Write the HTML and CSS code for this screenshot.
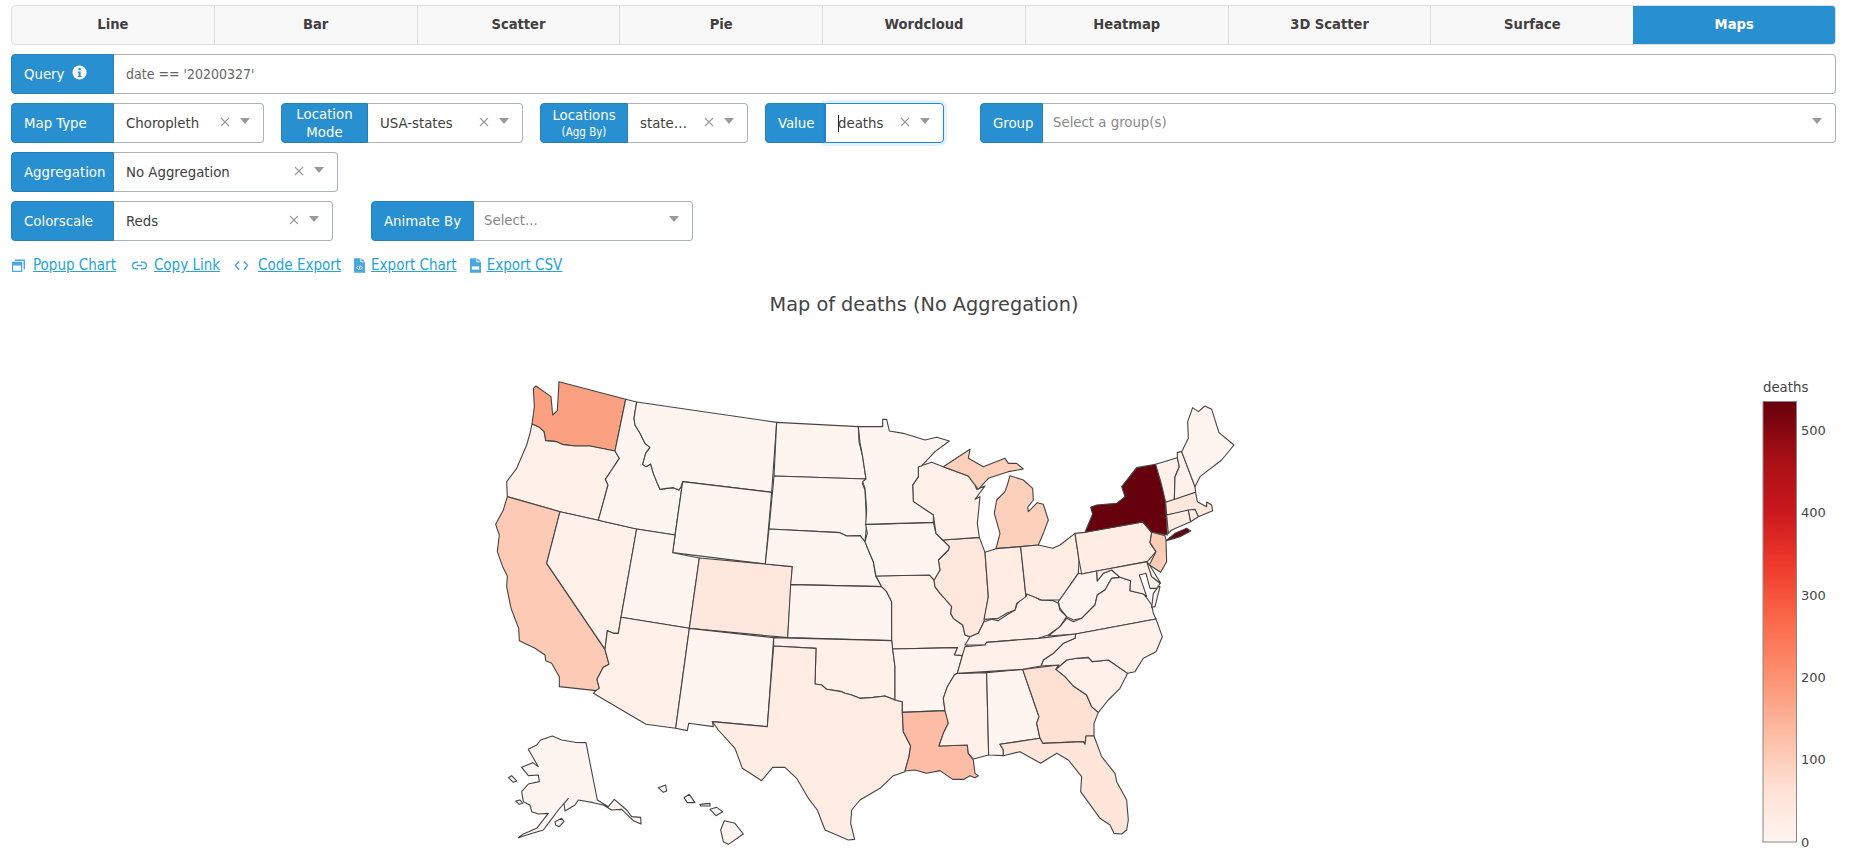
FILE: index.html
```html
<!DOCTYPE html>
<html lang="en">
<head>
<meta charset="utf-8">
<title>Maps</title>
<link rel="stylesheet" href="styles.css">
</head>
<body>
<div class="page">
  <nav class="tabs">
    <a class="tab">Line</a><a class="tab">Bar</a><a class="tab">Scatter</a><a class="tab">Pie</a><a class="tab">Wordcloud</a><a class="tab">Heatmap</a><a class="tab">3D Scatter</a><a class="tab">Surface</a><a class="tab active">Maps</a>
  </nav>

  <div class="row">
    <div class="group w-full">
      <div class="label">Query<svg class="info" viewBox="0 0 16 16"><circle cx="8" cy="8" r="7.5" fill="#fff"/><rect x="6.9" y="3.2" width="2.4" height="2.3" fill="#2890d0"/><path d="M6 7h3.2v4.6h1v1.3H6v-1.3h1V8.300H6z" fill="#2890d0"/></svg></div>
      <div class="input"><span class="query">date == '20200327'</span></div>
    </div>
  </div>

  <div class="row">
    <div class="group w-type">
      <div class="label">Map Type</div>
      <div class="select"><span class="value">Choropleth</span><svg class="x" viewBox="0 0 10 10"><path d="M1 1l8 8M9 1l-8 8"/></svg><i class="caret"></i></div>
    </div>
    <div class="group w-mode">
      <div class="label tall narrow-mode">Location Mode</div>
      <div class="select"><span class="value">USA-states</span><svg class="x" viewBox="0 0 10 10"><path d="M1 1l8 8M9 1l-8 8"/></svg><i class="caret"></i></div>
    </div>
    <div class="group w-locs">
      <div class="label tall narrow-locs"><span>Locations<small>(Agg By)</small></span></div>
      <div class="select"><span class="value clip">state…</span><svg class="x" viewBox="0 0 10 10"><path d="M1 1l8 8M9 1l-8 8"/></svg><i class="caret"></i></div>
    </div>
    <div class="group w-value">
      <div class="label narrow-value">Value</div>
      <div class="select focus"><span class="value"><b class="cursor"></b>deaths</span><svg class="x" viewBox="0 0 10 10"><path d="M1 1l8 8M9 1l-8 8"/></svg><i class="caret"></i></div>
    </div>
    <div class="group w-group">
      <div class="label narrow-group">Group</div>
      <div class="select"><span class="placeholder">Select a group(s)</span><i class="caret"></i></div>
    </div>
  </div>

  <div class="row">
    <div class="group w-agg">
      <div class="label">Aggregation</div>
      <div class="select"><span class="value">No Aggregation</span><svg class="x" viewBox="0 0 10 10"><path d="M1 1l8 8M9 1l-8 8"/></svg><i class="caret"></i></div>
    </div>
  </div>

  <div class="row">
    <div class="group w-color">
      <div class="label">Colorscale</div>
      <div class="select"><span class="value">Reds</span><svg class="x" viewBox="0 0 10 10"><path d="M1 1l8 8M9 1l-8 8"/></svg><i class="caret"></i></div>
    </div>
    <div class="group w-anim">
      <div class="label">Animate By</div>
      <div class="select"><span class="placeholder">Select...</span><i class="caret"></i></div>
    </div>
  </div>

  <div class="links">
    <span class="link wide"><svg class="ic" viewBox="0 0 16 16"><path d="M4 1.500h11v10.500h-1.600V3.200H4z"/><path d="M1 4h11v11H1zM2.300 8v5.700h8.400V8z"/></svg><a>Popup Chart</a></span>
    <span class="link"><svg class="ic" viewBox="0 0 16 16"><path d="M6.500 4.500H4.200a3.500 3.500 0 0 0 0 7h2.300M9.500 4.500h2.300a3.500 3.500 0 0 1 0 7H9.500M5 8h6" fill="none" stroke="#4aa8de" stroke-width="1.500"/></svg><a>Copy Link</a></span>
    <span class="link tight"><svg class="ic code" viewBox="0 0 16 16"><path d="M5.500 3.500L1.500 8l4 4.500M10.500 3.500l4 4.500-4 4.500" fill="none" stroke="#4aa8de" stroke-width="1.500"/></svg><a>Code Export</a></span>
    <span class="link tight"><svg class="ic file" viewBox="0 0 12 16"><path d="M0 0h7v4.500h5V16H0zM8 0l4 3.500H8z"/><path d="M4.700 8.500L3 10.500l1.700 2M7.300 8.500L9 10.500l-1.700 2M6.700 8l-1.400 5" fill="none" stroke="#fff" stroke-width=".9"/></svg><a>Export Chart</a></span>
    <span class="link"><svg class="ic file" viewBox="0 0 12 16"><path d="M0 0h7v4.500h5V16H0zM8 0l4 3.500H8z"/><rect x="2" y="9" width="8" height="3.500" fill="#fff"/></svg><a>Export CSV</a></span>
  </div>

  <div class="chart">
    <svg class="plot" viewBox="0 280 1850 575">
      <defs>
        <linearGradient id="reds" x1="0" y1="1" x2="0" y2="0">
          <stop offset="0" stop-color="#fff5f0"/><stop offset=".125" stop-color="#fee0d2"/><stop offset=".25" stop-color="#fcbba1"/><stop offset=".375" stop-color="#fc9272"/><stop offset=".5" stop-color="#fb6a4a"/><stop offset=".625" stop-color="#ef3b2c"/><stop offset=".75" stop-color="#cb181d"/><stop offset=".875" stop-color="#a50f15"/><stop offset="1" stop-color="#67000d"/>
        </linearGradient>
      </defs>
      <text class="title" x="924" y="311" text-anchor="middle">Map of deaths (No Aggregation)</text>

      <g class="map" transform="translate(480 370) scale(.33333)">
        <polygon class="wa" points="160,55 168,48 213,80 218,135 232,122 237,35 437,88 405,243 330,228 285,228 250,224 230,215 197,212 192,185 175,170 156,162 163,110"/>
        <polygon class="s1" points="156,162 175,170 192,185 197,212 230,215 250,224 285,228 330,228 405,243 418,265 395,300 376,328 384,345 355,451 240,425 82,380 80,335 110,295 140,225 150,190"/>
        <polygon class="ca" points="82,380 240,425 200,580 375,838 387,883 370,892 351,928 358,955 348,962 238,950 238,920 215,880 197,872 195,855 165,835 118,812 116,775 95,720 92,710 80,650 82,618 68,590 52,545 58,495 47,463 70,420"/>
        <polygon class="s1" points="240,425 355,451 470,477 423,742 415,790 400,790 382,782 375,838 200,580"/>
        <polygon class="s0" points="437,88 470,96 462,145 465,165 480,190 495,220 510,232 497,250 488,283 498,290 512,282 520,310 530,335 540,358 560,355 580,353 597,360 603,350 608,335 585,495 470,477 355,451 384,345 376,328 395,300 418,265 405,243"/>
        <polygon class="s0" points="470,96 890,157 875,367 608,335 603,350 597,360 580,353 560,355 540,358 530,335 520,310 512,282 498,290 488,283 497,250 510,232 495,220 480,190 465,165 462,145"/>
        <polygon class="s0" points="608,335 875,367 856,582 578,548"/>
        <polygon class="s0" points="470,477 585,495 578,548 658,564 628,775 423,742"/>
        <polygon class="s3" points="658,564 856,582 937,590 923,803 628,775"/>
        <polygon class="s1" points="423,742 628,775 587,1075 498,1063 340,970 348,962 358,955 351,928 370,892 387,883 375,838 382,782 400,790 415,790"/>
        <polygon class="s0" points="628,775 881,803 862,1070 697,1055 700,1070 626,1060 622,1082 587,1075"/>
        <polygon class="s0" points="890,157 1135,170 1137,215 1148,260 1158,327 882,318"/>
        <polygon class="s0" points="882,318 1158,327 1147,340 1155,360 1160,463 1155,515 1140,497 1100,498 1080,488 867,477"/>
        <polygon class="s0" points="867,477 1080,488 1100,498 1140,497 1155,515 1165,540 1180,575 1187,618 1205,650 932,644 937,590 856,582"/>
        <polygon class="s0" points="932,644 1205,650 1220,665 1235,695 1235,812 923,803"/>
        <polygon class="s1" points="1188,618 1348,615 1362,630 1365,650 1380,670 1398,690 1415,710 1412,730 1420,745 1448,765 1455,795 1470,800 1460,830 1447,857 1423,855 1432,833 1238,837 1235,812 1235,695 1220,665 1205,650"/>
        <polygon class="s1" points="881,803 1235,812 1238,837 1245,890 1245,990 1215,978 1180,982 1140,985 1115,975 1095,970 1085,965 1040,958 1025,945 1005,942 1008,835 881,828"/>
        <polygon class="s2" points="881,828 1008,835 1005,942 1025,945 1040,958 1085,965 1095,970 1115,975 1140,985 1180,982 1215,978 1245,990 1267,995 1267,1027 1270,1085 1292,1128 1287,1160 1275,1205 1240,1217 1200,1255 1140,1290 1115,1320 1112,1360 1124,1408 1105,1410 1035,1380 1012,1320 985,1285 950,1225 915,1192 878,1192 845,1232 787,1195 765,1135 715,1080 697,1055 862,1070"/>
        <polygon class="s3" points="1388,510 1498,502 1515,547 1525,680 1515,740 1512,755 1495,790 1470,800 1455,795 1448,765 1420,745 1412,730 1415,710 1398,690 1380,670 1365,650 1362,630 1380,600 1375,570 1405,540 1408,530"/>
        <polygon class="s1" points="1455,825 1470,800 1495,790 1512,755 1535,748 1555,752 1580,735 1605,720 1612,700 1640,672 1655,675 1680,690 1720,692 1735,700 1740,720 1760,740 1740,770 1705,795 1675,805 1520,817 1515,825"/>

        <g transform="translate(0 720)">
          <polygon class="s0" points="318,398 352,570 385,590 403,568 440,600 455,620 482,622 483,642 460,632 425,598 395,600 370,585 340,578 295,570 285,585 255,603 252,580 265,565 235,600 205,640 190,660 150,672 115,683 130,672 170,655 205,610 175,612 155,605 150,585 130,575 125,545 145,522 178,515 175,495 145,497 125,472 158,458 175,470 145,418 170,405 182,390 217,378 245,390 285,397"/>
          <polygon class="s0" points="85,503 95,497 110,513 100,517"/>
          <polygon class="s0" points="107,573 120,570 128,580 118,583"/>
          <polygon class="s0" points="225,635 245,625 252,635 237,650 227,645"/>
          <polygon class="s0" points="535,533 557,525 560,543 550,547"/>
          <polygon class="s0" points="612,563 628,553 645,578 622,578"/>
          <polygon class="s0" points="660,583 690,580 690,588 662,588"/>
          <polygon class="s0" points="690,598 710,592 728,605 708,617"/>
          <polygon class="s0" points="733,632 765,640 790,672 745,703 730,695 722,660"/>
        </g>

        <g transform="translate(1140 0)">
          <polygon class="s0" points="17,463 220,457 228,490 248,510 268,530 265,540 235,570 240,600 222,630 208,615 48,618 40,575 25,540 15,515 22,490"/>
          <polygon class="s1" points="175,290 215,277 250,290 325,318 345,345 350,358 375,348 345,388 360,380 352,460 358,502 248,510 228,490 220,435 160,395 158,345 175,320"/>
          <polygon class="s0" points="-5,170 68,170 68,148 80,148 88,183 130,190 195,210 230,202 268,213 225,245 185,288 175,290 175,320 158,345 160,395 220,435 220,457 17,463 20,420 15,355 8,335 18,327 8,260 0,218"/>
          <polygon class="mi" points="250,290 330,238 325,265 370,290 435,265 445,280 470,280 490,297 445,305 385,325 355,358 345,345 325,318"/>
          <polygon class="mi" points="450,317 490,330 518,355 520,390 503,412 505,425 532,398 550,403 565,450 550,490 535,525 408,536 420,490 403,430 410,390 435,365 442,345"/>
          <polygon class="s2" points="375,547 408,536 482,530 498,680 470,700 465,720 440,730 415,745 372,748 385,680"/>
          <polygon class="s2" points="482,530 535,525 578,535 600,525 645,490 657,570 655,610 620,660 600,690 575,690 545,690 500,672 498,680"/>
          <polygon class="s2" points="645,490 675,487 848,456 868,478 875,490 870,518 888,545 862,575 665,612 657,570"/>
          <polygon class="ny" points="675,487 698,432 692,412 710,405 770,400 795,380 785,350 830,293 887,283 905,345 915,380 922,495 875,487 848,456"/>
          <polygon class="ny" points="917,513 945,490 980,475 992,483 960,500"/>
          <polygon class="nj" points="875,487 915,497 918,510 920,575 902,607 868,585 888,545 870,518"/>
          <polygon class="s1" points="887,283 952,263 958,290 945,320 943,390 917,397 905,345"/>
          <polygon class="s1" points="952,263 952,247 965,245 1005,350 1007,367 943,390 945,320 958,290"/>
          <polygon class="s0" points="965,245 985,205 983,155 998,113 1015,125 1035,108 1055,118 1077,188 1122,225 1085,270 1020,320 1005,350"/>
          <polygon class="s3" points="917,397 1007,367 1012,395 1040,410 1040,396 1055,405 1058,422 1015,440 1005,420 920,435"/>
          <polygon class="s2" points="920,435 985,420 992,455 935,480 925,490"/>
          <polygon class="s2" points="985,420 1005,418 1015,440 992,455"/>
          <polygon class="s0" points="655,610 665,612 710,603 712,633 730,610 755,600 780,622 755,625 735,660 712,675 705,705 665,745 640,750 620,740 600,715 595,695 620,660"/>
          <polygon class="s1" points="565,798 600,770 620,745 640,755 665,745 705,705 712,675 735,660 755,625 780,622 812,632 810,662 850,672 865,690 875,705 880,730 888,747 647,792"/>
          <polygon class="s1" points="710,603 862,575 875,620 900,640 892,655 870,655 858,610 838,615 850,650 860,680 850,672 810,662 812,632 780,622 755,600 730,610 712,633"/>
          <polygon class="s1" points="860,575 872,590 902,640 875,620"/>
          <polygon class="s1" points="900,650 885,710 875,712 880,670 895,650"/>
        </g>

        <g transform="translate(1140 720)">
          <polygon class="s0" points="98,117 292,113 283,135 307,137 292,190 283,195 262,230 250,265 255,302 127,307 127,275 105,270 105,170"/>
          <polygon class="la" points="127,307 255,302 262,318 265,340 250,370 237,408 322,405 325,430 340,450 345,490 355,497 345,503 330,497 312,508 278,508 240,482 200,490 165,480 135,483 147,440 152,408 130,365"/>
          <polygon class="s1" points="292,190 380,188 386,435 340,447 325,430 322,405 237,408 250,370 265,340 255,302 250,265 262,230 283,195"/>
          <polygon class="s0" points="380,188 488,178 530,300 537,320 530,340 540,385 420,403 430,420 430,437 386,435"/>
          <polygon class="ga" points="488,178 597,165 588,178 615,200 640,228 680,255 695,290 715,307 702,340 702,378 678,378 675,403 670,395 548,400 540,385 530,340 537,320"/>
          <polygon class="fl" points="420,403 540,385 548,400 670,395 675,403 678,378 702,378 725,440 765,490 770,515 800,570 805,630 800,660 785,672 762,670 750,645 720,625 662,545 665,500 625,450 590,430 542,460 515,445 480,425 430,437 430,420"/>
          <polygon class="s1" points="588,178 620,150 650,145 685,142 697,155 745,150 803,190 780,235 745,270 715,307 695,290 680,255 640,228 615,200"/>
          <polygon class="s1" points="543,168 550,150 580,130 610,100 645,85 647,72 888,27 907,80 888,125 850,145 825,185 803,190 745,150 697,155 685,142 650,145 620,150 588,178 597,165"/>
          <polygon class="s1" points="315,110 375,105 380,97 535,85 647,72 645,85 610,100 580,130 550,150 543,168 488,178 292,190 307,137"/>
        </g>
      </g>

      <text class="cbtitle" x="1763" y="392">deaths</text>
      <rect class="cbar" x="1763" y="401.500" width="33.500" height="440.500" fill="url(#reds)"/>
      <text class="tick" x="1801" y="435">500</text>
      <text class="tick" x="1801" y="517">400</text>
      <text class="tick" x="1801" y="600">300</text>
      <text class="tick" x="1801" y="682">200</text>
      <text class="tick" x="1801" y="764">100</text>
      <text class="tick" x="1801" y="847">0</text>
    </svg>
  </div>
</div>
</body>
</html>
```

FILE: styles.css
```css
* { box-sizing: border-box; }
html, body { margin: 0; padding: 0; height: 100%; overflow: hidden; background: #fff; }
body {
  font-family: "DejaVu Sans Condensed", "DejaVu Sans", sans-serif;
  font-size: 14.8px;
  color: #404040;
}
.page { padding: 5px 14px 0 11px; }

.tabs {
  display: flex;
  height: 40px;
  border: 1px solid #ddd;
  border-radius: 4px;
  background: #f8f8f8;
  overflow: hidden;
  margin-bottom: 9px;
}
.tab {
  flex: 1 1 0;
  display: flex;
  align-items: center;
  justify-content: center;
  padding-bottom: 4px;
  font-size: 14.6px;
  font-weight: 700;
  border-left: 1px solid #ddd;
}
.tab:first-child { border-left: 0; }
.tab.active { background: #2890d0; color: #fff; border-left: 0; }

.row { display: flex; height: 40px; margin-bottom: 9px; }
.group { display: flex; height: 40px; }
.w-full { width: 100%; }
.w-type { width: 253px; margin-right: 17px; }
.w-mode { width: 242px; margin-right: 17px; }
.w-locs { width: 208px; margin-right: 17px; }
.w-value { width: 179px; margin-right: 36px; }
.w-group { flex: 1; }
.w-agg { width: 327px; }
.w-color { width: 322px; margin-right: 38px; }
.w-anim { width: 322px; }

.label {
  flex: 0 0 103px;
  display: flex;
  align-items: center;
  background: #2890d0;
  color: #fff;
  border: 1px solid #2580b8;
  border-radius: 4px 0 0 4px;
  line-height: 18px;
  padding: 0 0 1px 12px;
}
.tall { justify-content: center; text-align: center; padding: 0 2px; }
.narrow-mode { flex-basis: 87px; }
.narrow-locs { flex-basis: 88px; }
.narrow-value { flex-basis: 60px; }
.narrow-group { flex-basis: 63px; }
.label small { display: block; font-size: 11.500px; line-height: 17px; }
.label span { display: block; }
.info { width: 15px; height: 15px; margin-left: 8px; margin-top: -2px; }

.input, .select {
  flex: 1;
  min-width: 0;
  display: flex;
  align-items: center;
  background: #fff;
  border: 1px solid #aab4b8;
  border-left: 0;
  border-radius: 0 4px 4px 0;
  padding: 0 13px 1px 12px;
}
.query { color: #666; font-size: 14px; }
.value { flex: 1; white-space: nowrap; overflow: hidden; }
.placeholder { flex: 1; color: #888; margin-top: -3px; margin-left: -2px; }
.x { width: 10px; height: 10px; margin-right: 10px; margin-top: -2px; flex: none; }
.x path { stroke: #999; stroke-width: 1.1; fill: none; }
.caret {
  flex: none;
  width: 0;
  height: 0;
  margin-top: -3px;
  border-left: 5.500px solid transparent;
  border-right: 5.500px solid transparent;
  border-top: 6px solid #999;
}
.focus {
  border: 1px solid #1a86f0;
  box-shadow: 0 0 0 3px rgba(0, 123, 255, .1);
}
.cursor { display: inline-block; width: 1px; height: 17px; margin-right: -1px; background: #222; vertical-align: -4px; }

.links { display: flex; align-items: center; height: 16px; margin-top: 16px; font-size: 15px; }
.link { display: flex; align-items: center; margin-right: 14px; }
.link.wide { margin-right: 16px; }
.link.tight { margin-right: 13px; }
.link a { color: #24a3d9; text-decoration: underline; }
.ic { width: 15px; height: 15px; fill: #4aa8de; margin-right: 7px; flex: none; }
.ic.code { margin-right: 9px; }
.ic.file { width: 11px; margin-right: 6px; }

.chart { margin: 7px -14px 0 -11px; }
.plot { display: block; width: 1850px; height: 575px; }
.title { font: 19.300px "DejaVu Sans", sans-serif; fill: #444; }
.cbtitle { font: 13.300px "DejaVu Sans", sans-serif; fill: #444; }
.tick { font: 13px "DejaVu Sans", sans-serif; fill: #444; }
.cbar { stroke: #888; stroke-width: 1; }

.map polygon { stroke: #444; stroke-width: 3.300; stroke-linejoin: round; fill: #fff5f0; }
.map .s0 { fill: #fff5f0; }
.map .s1 { fill: #fff0ea; }
.map .s2 { fill: #ffede4; }
.map .s3 { fill: #fee8dd; }
.map .wa { fill: #fca082; }
.map .ca { fill: #fdcab5; }
.map .la { fill: #fdbca5; }
.map .ga { fill: #fee1d3; }
.map .fl { fill: #fee6da; }
.map .mi { fill: #fdd0bc; }
.map .nj { fill: #fdcbb6; }
.map .ny { fill: #67000d; }
```
